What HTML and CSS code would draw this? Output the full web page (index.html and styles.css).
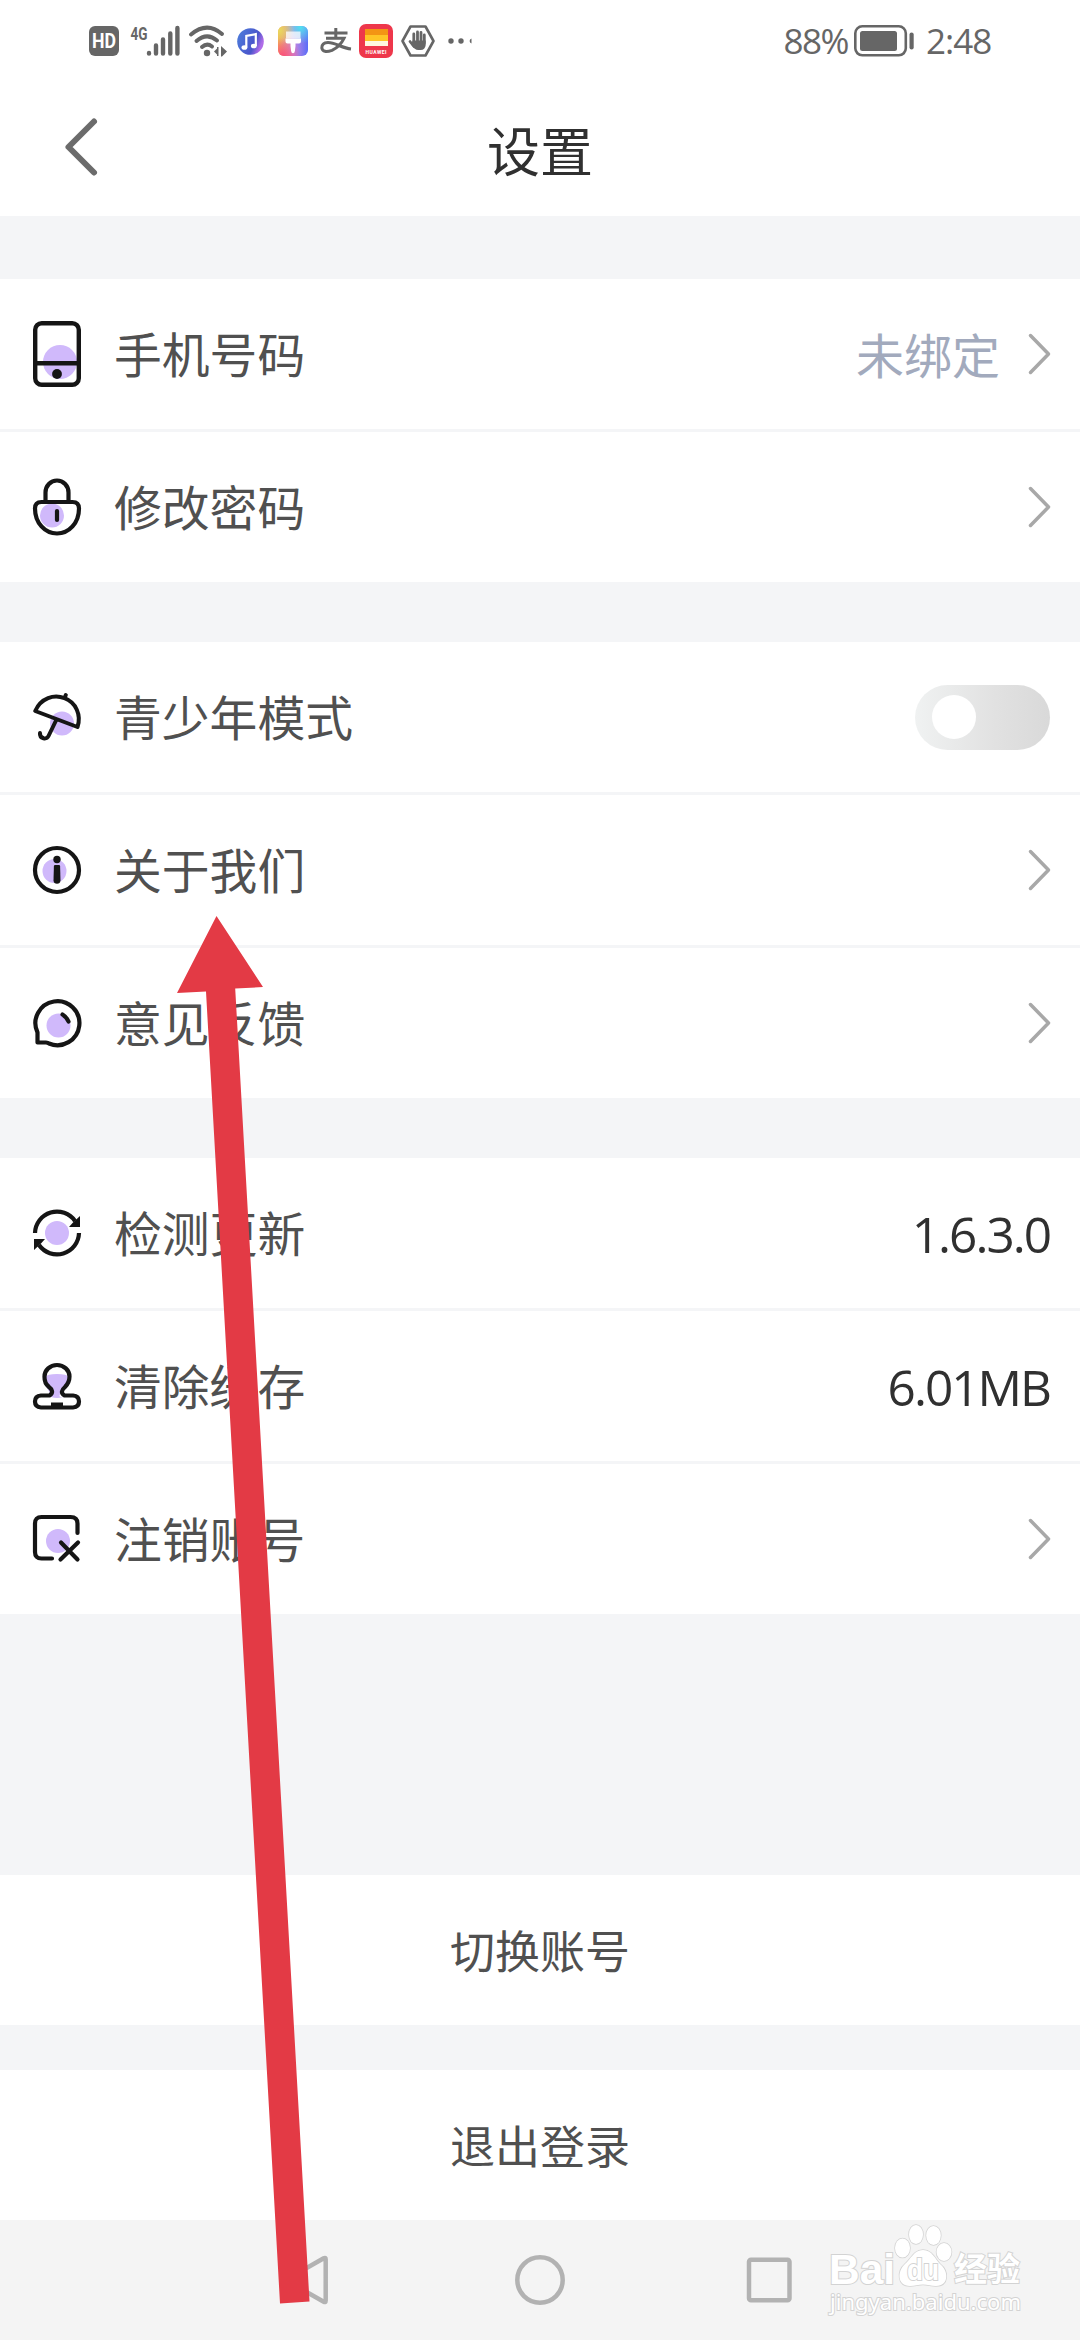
FILE: index.html
```html
<!DOCTYPE html>
<html lang="zh-CN">
<head>
<meta charset="utf-8">
<title>设置</title>
<link rel="stylesheet" href="styles.css">
</head>
<body>
<div class="screen">
  <div class="statusbar">
    <svg class="hd" width="30" height="30" viewBox="0 0 30 30"><rect width="30" height="30" rx="6" fill="#666"/><text x="15" y="22" text-anchor="middle" textLength="24" lengthAdjust="spacingAndGlyphs" class="hd-text">HD</text></svg>
    <svg class="signal" width="50" height="32" viewBox="0 0 50 32"><text x="0.500" y="14.500" textLength="17" lengthAdjust="spacingAndGlyphs" class="net-text">4G</text><g stroke="#666" stroke-width="4.4" stroke-linecap="round"><path d="M19 28v.5M26 20.500v8M33 14.500v14M40.300 8.500v20M47.400 3v25.500"/></g></svg>
    <svg class="wifi" width="38" height="32" viewBox="0 0 38 32"><g fill="none" stroke="#666" stroke-width="4" stroke-linecap="round"><path d="M2 9.500Q18 -4 33 9M7.500 16Q18 7 28 15.500M13 22Q18 17.500 23 21.500"/></g><circle cx="18" cy="28" r="3.200" fill="#666"/><path d="M25 26.500l4-4v8zM28 22h1.500v9H28zM32 21l6 5.500-5 5h-1z" fill="#666"/></svg>
    <svg class="music" width="27" height="27" viewBox="0 0 27 27"><defs><linearGradient id="gm" x1="0" y1="0" x2="1" y2=".4"><stop offset="0" stop-color="#4d80dc"/><stop offset=".75" stop-color="#4a55cb"/><stop offset="1" stop-color="#b06ce8"/></linearGradient></defs><circle cx="13.500" cy="13.500" r="13.300" fill="url(#gm)"/><g stroke="#fff" fill="none" stroke-width="2.200"><path d="M9.300 19.500V7.800l9.500-1.700v12"/></g><ellipse cx="7.400" cy="19.500" rx="2.900" ry="2.300" fill="#fff"/><ellipse cx="16.800" cy="18" rx="2.900" ry="2.300" fill="#fff"/></svg>
    <svg class="theme" width="30" height="30" viewBox="0 0 30 30"><defs><linearGradient id="gt" x1="0" y1="0" x2="1" y2="0"><stop offset="0" stop-color="#f6a94e"/><stop offset=".5" stop-color="#c98ae0"/><stop offset="1" stop-color="#5a6df8"/></linearGradient><radialGradient id="gy" cx=".05" cy=".15" r=".5"><stop offset="0" stop-color="#e8d95e"/><stop offset="1" stop-color="#e8d95e" stop-opacity="0"/></radialGradient><radialGradient id="gc" cx=".75" cy=".05" r=".55"><stop offset="0" stop-color="#4fe0f0"/><stop offset="1" stop-color="#4fe0f0" stop-opacity="0"/></radialGradient><radialGradient id="gp" cx=".15" cy="1" r=".6"><stop offset="0" stop-color="#fa4f7c"/><stop offset="1" stop-color="#fa4f7c" stop-opacity="0"/></radialGradient></defs><rect width="30" height="30" rx="6" fill="url(#gt)"/><rect width="30" height="30" rx="6" fill="url(#gc)"/><rect width="30" height="30" rx="6" fill="url(#gy)"/><rect width="30" height="30" rx="6" fill="url(#gp)"/><path d="M8 5.500h14.500v7H8z" fill="#fff" opacity=".75"/><path d="M7.500 12.500h15.500v3q0 2-2 2h-3.500v2.500l-.6 5q-.3 2.200-1.900 2.200t-1.900-2.200l-.6-5v-2.500H9.500q-2 0-2-2z" fill="#fff"/></svg>
    <svg class="alipay" width="32" height="26" viewBox="0 0 32 26"><g fill="none" stroke="#666" stroke-width="3"><path d="M4.500 5h23M15.800 0v10M6 10.300h18Q20 18.500 12 22.300Q3 25.500 1.800 20Q1.700 15 8 14.600C15 14.500 22 20 31 21"/></g></svg>
    <svg class="huawei" width="34" height="34" viewBox="0 0 34 34"><rect width="34" height="34" rx="7" fill="#ee374b"/><path d="M6 5h23v6H6z" fill="#f39514"/><path d="M6 11h23v6H6z" fill="#ffc526"/><path d="M6 17h23v5H6z" fill="#fff7df"/><text x="17" y="29.500" text-anchor="middle" textLength="21" class="brand-text">HUAWEI</text></svg>
    <svg class="hand" width="34" height="32" viewBox="0 0 34 32"><path d="M9.500 1.500h15L32.500 16l-8 14.500h-15L1.500 16z" fill="none" stroke="#666" stroke-width="2.600" stroke-linejoin="round"/><path d="M12.800 19V9M16.500 17V7M20 17V7.500M23.300 18V10M9 16.500l4 5" stroke="#666" stroke-width="2.800" stroke-linecap="round"/><path d="M11.500 15.500h13.200V20q-.7 5-5 5h-2.500q-3.500 0-6.700-5z" fill="#666"/></svg>
    <svg class="dots" width="25" height="6" viewBox="0 0 25 6"><g fill="#666"><circle cx="3" cy="3" r="2.700"/><circle cx="13" cy="3" r="2.700"/><path d="M23.500.5v5a2.600 2.600 0 0 1 0-5z"/></g></svg>
    <span class="battery-text">88%</span>
    <svg class="battery" width="62" height="32" viewBox="0 0 62 32"><rect x="1.300" y="1.300" width="50.500" height="29" rx="7" fill="none" stroke="#666" stroke-width="2.600"/><rect x="6" y="6" width="37" height="20" rx="2.500" fill="#666"/><rect x="55.500" y="7.500" width="4.200" height="17" rx="2.100" fill="#666"/></svg>
    <span class="clock">2:48</span>
  </div>
  <div class="titlebar">
    <svg class="back" width="32" height="58" viewBox="0 0 32 58"><path d="M29 3.500L3.500 29 29 54.500" fill="none" stroke="#6b6b6b" stroke-width="6" stroke-linecap="round" stroke-linejoin="round"/></svg>
    <h1 class="title">设置</h1>
  </div>

  <div class="group">
    <div class="row">
      <svg class="icon" width="48" height="66" viewBox="0 0 48 66"><circle cx="27" cy="41" r="17" fill="#d0b9fb"/><g fill="none" stroke="#151515" stroke-width="4.400"><rect x="2.200" y="2.200" width="43.600" height="61.600" rx="6.500"/><path d="M2 42.300h44"/></g><circle cx="24" cy="53" r="4.900" fill="#151515"/></svg>
      <span class="label">手机号码</span><span class="hint">未绑定</span>
      <svg class="chevron" width="21" height="40" viewBox="0 0 21 40"><path d="M1.500 1.500L19.500 20l-18 18.500"/></svg>
    </div>
    <div class="row">
      <svg class="icon" width="48" height="58" viewBox="0 0 48 58"><circle cx="19" cy="37.500" r="12" fill="#d0b9fb"/><g fill="none" stroke="#151515" stroke-width="4.200"><path d="M12.500 24V14.500a11.500 12 0 0 1 23 0V24M8.500 24h31q6.500 0 6.500 6.500C46 45 36 55.500 24 55.500S2 45 2 30.500Q2 24 8.500 24z"/><path d="M24 33v9" stroke-linecap="round"/></g></svg>
      <span class="label">修改密码</span>
      <svg class="chevron" width="21" height="40" viewBox="0 0 21 40"><path d="M1.500 1.500L19.500 20l-18 18.500"/></svg>
    </div>
  </div>

  <div class="group">
    <div class="row">
      <svg class="icon" width="48" height="48" viewBox="0 0 48 48"><circle cx="29" cy="30.500" r="12" fill="#d0b9fb"/><g fill="none" stroke="#151515" stroke-width="4" stroke-linecap="round" stroke-linejoin="round"><path d="M2.200 18C8 5 21 1 31.500 5.200C43 9.500 48.500 22 44.500 34zM31.800 4.500l1-2.500M23.500 26.500L15.500 43q-1.500 3-5 2.300Q6.500 44.200 7 40"/></g></svg>
      <span class="label">青少年模式</span>
      <span class="switch"><span class="knob"></span></span>
    </div>
    <div class="row">
      <svg class="icon" width="48" height="48" viewBox="0 0 48 48"><circle cx="21.500" cy="25" r="12" fill="#d0b9fb"/><circle cx="24" cy="24" r="22" fill="none" stroke="#151515" stroke-width="4.200"/><circle cx="24" cy="13.500" r="3.700" fill="#151515"/><path d="M22 19h4q1 0 1.100 1l.4 14.500q-.3 3.300-3.500 3.300t-3.500-3.300l.4-14.500q.1-1 1.100-1z" fill="#151515"/></svg>
      <span class="label">关于我们</span>
      <svg class="chevron" width="21" height="40" viewBox="0 0 21 40"><path d="M1.500 1.500L19.500 20l-18 18.500"/></svg>
    </div>
    <div class="row">
      <svg class="icon" width="48" height="48" viewBox="0 0 48 48"><circle cx="25.500" cy="26.500" r="12" fill="#d0b9fb"/><g fill="none" stroke="#151515" stroke-width="4.200" stroke-linejoin="round" stroke-linecap="round"><path d="M4.500 33.500A22 22 0 1 1 16 44.500Q15 43.500 13 43.500H4.500z"/><path d="M29.500 15.500q4 2.500 6 7"/></g></svg>
      <span class="label">意见反馈</span>
      <svg class="chevron" width="21" height="40" viewBox="0 0 21 40"><path d="M1.500 1.500L19.500 20l-18 18.500"/></svg>
    </div>
  </div>

  <div class="group">
    <div class="row">
      <svg class="icon" width="48" height="48" viewBox="0 0 48 48"><circle cx="24" cy="24" r="12" fill="#d0b9fb"/><g fill="none" stroke="#151515" stroke-width="4.200"><path d="M2 24A22 22 0 0 1 42 12M46 24A22 22 0 0 1 6 36"/></g><path d="M47 7v11H36l4-4.500zM1 41V30h11l-4 4.500z" fill="#151515"/></svg>
      <span class="label">检测更新</span><span class="value">1.6.3.0</span>
    </div>
    <div class="row">
      <svg class="icon" width="48" height="47" viewBox="0 0 48 47"><path d="M11.500 14q3-3 12.500-3t12.500 3-5.500 12-1 8q-6 2-12 0-1-5-4-9t-2.500-11z" fill="#d0b9fb"/><path d="M16.500 32.500c4-2.500 3-6-.5-8.500C11 20 11.500 14.500 11.500 13.500a12.500 11.500 0 0 1 25 0C36.500 17 35.500 20.500 32 24c-3.500 3-4.500 6-.5 8.500H40q6 .5 6 6t-6 6H8q-6-.5-6-6t6-6z" fill="none" stroke="#151515" stroke-width="4.200"/><path d="M18 39.500h12V45H18z" fill="#151515"/></svg>
      <span class="label">清除缓存</span><span class="value">6.01MB</span>
    </div>
    <div class="row">
      <svg class="icon" width="48" height="48" viewBox="0 0 48 48"><circle cx="25" cy="26" r="12" fill="#d0b9fb"/><g fill="none" stroke="#151515" stroke-width="4.200" stroke-linecap="round"><path d="M19 43.500H8.500Q2 43.500 2 37V8.500Q2 2 8.500 2h29Q44.500 2 44.500 8.500V18"/><path d="M28 27.500l16.500 17M45 27.500L27.500 44.500"/></g></svg>
      <span class="label">注销账号</span>
      <svg class="chevron" width="21" height="40" viewBox="0 0 21 40"><path d="M1.500 1.500L19.500 20l-18 18.500"/></svg>
    </div>
  </div>

  <div class="actions">
    <div class="action">切换账号</div>
    <div class="action">退出登录</div>
  </div>

  <div class="navbar">
    <svg width="50" height="50" viewBox="0 0 50 50"><path d="M44.700 4.500v41q0 2.300-2 1.200L8 27q-2-2 0-4L42.700 3.300q2-1.100 2 1.200z"/></svg>
    <svg class="home" width="50" height="50" viewBox="0 0 50 50"><circle cx="25" cy="25" r="22.700"/></svg>
    <svg width="50" height="50" viewBox="0 0 50 50"><rect x="5" y="4.700" width="40.500" height="40.500" rx="2"/></svg>
  </div>

  <svg class="arrow" width="136" height="1394" viewBox="0 0 136 1394"><path d="M41.500 2L88 73 60.200 74.500 134.500 1387.500 105 1389.500 31 77.500 2 79z"/></svg>

  <svg class="watermark" width="210" height="100" viewBox="0 0 210 100">
    <g class="wm-shape"><ellipse cx="74.500" cy="27" rx="7.500" ry="9.500"/><ellipse cx="88" cy="13.500" rx="7" ry="9.500"/><ellipse cx="105.500" cy="14.500" rx="7.300" ry="9.500"/><ellipse cx="116" cy="31" rx="7.500" ry="9"/><path d="M95 29c9 0 12 9 17 14 9 7 9 22-4 22-5 0-8-1.500-13-1.500S87 65 82 65c-13 0-13-15-5-22 6-5 9-14 18-14z"/></g>
    <text class="wm-logo" x="1" y="62.500" textLength="66" lengthAdjust="spacingAndGlyphs">Bai</text>
    <text class="wm-du" x="79" y="59" textLength="32" lengthAdjust="spacingAndGlyphs">du</text>
    <text class="wm-cn" x="126" y="60" textLength="66">经验</text>
    <text class="wm-url" x="2" y="89" textLength="191">jingyan.baidu.com</text>
  </svg>
</div>
</body>
</html>
```
FILE: styles.css
```css
* { box-sizing: border-box; }
body { margin: 0; }
svg { display: block; flex: none; overflow: visible; }

.screen {
  position: relative;
  display: flex;
  flex-direction: column;
  width: 1080px;
  height: 2340px;
  overflow: hidden;
  background: #f4f5f7;
  font-family: "Noto Sans CJK SC", sans-serif;
  color: #505050;
}

.statusbar {
  display: flex;
  align-items: center;
  height: 82px;
  padding: 0 88px 0 89px;
  background: #fff;
  color: #666;
}
.signal { margin-left: 11px; }
.wifi { margin-left: 9px; }
.music { margin-left: 10px; }
.theme { margin-left: 14px; }
.alipay { margin-left: 12px; }
.huawei { margin-left: 7px; }
.hand { margin-left: 8px; }
.dots { margin-left: 13px; }
.battery-text, .clock {
  font-family: "Open Sans", sans-serif;
  font-size: 35px;
  line-height: 40px;
  white-space: nowrap;
}
.battery-text { margin-left: auto; letter-spacing: -1.500px; }
.battery { margin-left: 6px; }
.clock { width: 66px; margin-left: 10px; letter-spacing: -1px; }
.hd-text { font: bold 20px Roboto, sans-serif; fill: #fff; }
.net-text { font: bold 18px Roboto, sans-serif; fill: #666; }
.brand-text { font: bold 5px Roboto, sans-serif; fill: #fff; }

.titlebar {
  display: grid;
  grid-template-columns: 32px 1fr 32px;
  align-items: center;
  height: 134px;
  padding: 0 65px 4px;
  background: #fff;
}
.title {
  margin: 4px 0 0;
  text-align: center;
  font-size: 53px;
  font-weight: 400;
  line-height: 70px;
  color: #303030;
}

.group { display: flex; flex-direction: column; gap: 3px; margin-top: 60px; }
.titlebar + .group { margin-top: 63px; }
.row {
  display: flex;
  align-items: center;
  height: 150px;
  padding: 0 30px 0 33px;
  background: #fff;
}
.label { margin-left: 33px; padding-bottom: 2px; font-size: 47.800px; line-height: 70px; }
.hint { margin-left: auto; padding-bottom: 3px; font-size: 48px; line-height: 70px; color: #a2aabd; }
.chevron { margin-left: auto; }
.hint + .chevron { margin-left: 29px; }
.chevron path { fill: none; stroke: #a8a8a8; stroke-width: 3.500; stroke-linecap: round; stroke-linejoin: round; }
.value {
  margin-left: auto;
  padding-top: 1px;
  font-family: "Open Sans", sans-serif;
  font-size: 49.500px;
  line-height: 70px;
  letter-spacing: -2px;
  color: #303030;
}
.switch {
  display: flex;
  align-items: center;
  width: 135px;
  height: 65px;
  margin-left: auto;
  padding-left: 17px;
  border-radius: 33px;
  background: linear-gradient(90deg, #f0f2f2, #e1e1e1 60%, #d9d9d9);
}
.knob { width: 44px; height: 44px; border-radius: 50%; background: #fff; }

.actions { display: flex; flex-direction: column; gap: 45px; margin-top: 261px; }
.action {
  height: 150px;
  background: #fff;
  text-align: center;
  font-size: 45px;
  line-height: 149px;
}

.navbar {
  display: flex;
  justify-content: space-between;
  align-items: center;
  height: 120px;
  padding: 0 286px 0 281px;
  background: #f4f4f4;
}
.navbar svg { fill: none; stroke: #b2b2b2; stroke-width: 4.500; }
.navbar .home { margin-left: 5px; }

.arrow { position: absolute; left: 175px; top: 914px; fill: #e33a45; }

.watermark { position: absolute; left: 828px; top: 2221px; }
.watermark text, .wm-shape { fill: #fff; stroke: #d3d3d3; stroke-width: 2; paint-order: stroke; }
.wm-shape { stroke-width: 1.500; }
.watermark .wm-logo { font: bold 42px "Liberation Sans", sans-serif; }
.watermark .wm-du { font: bold 29px "Liberation Sans", sans-serif; }
.watermark .wm-cn { font: bold 33px "Noto Sans CJK SC", sans-serif; }
.watermark .wm-url { font: 22px "Noto Sans", sans-serif; }
```
